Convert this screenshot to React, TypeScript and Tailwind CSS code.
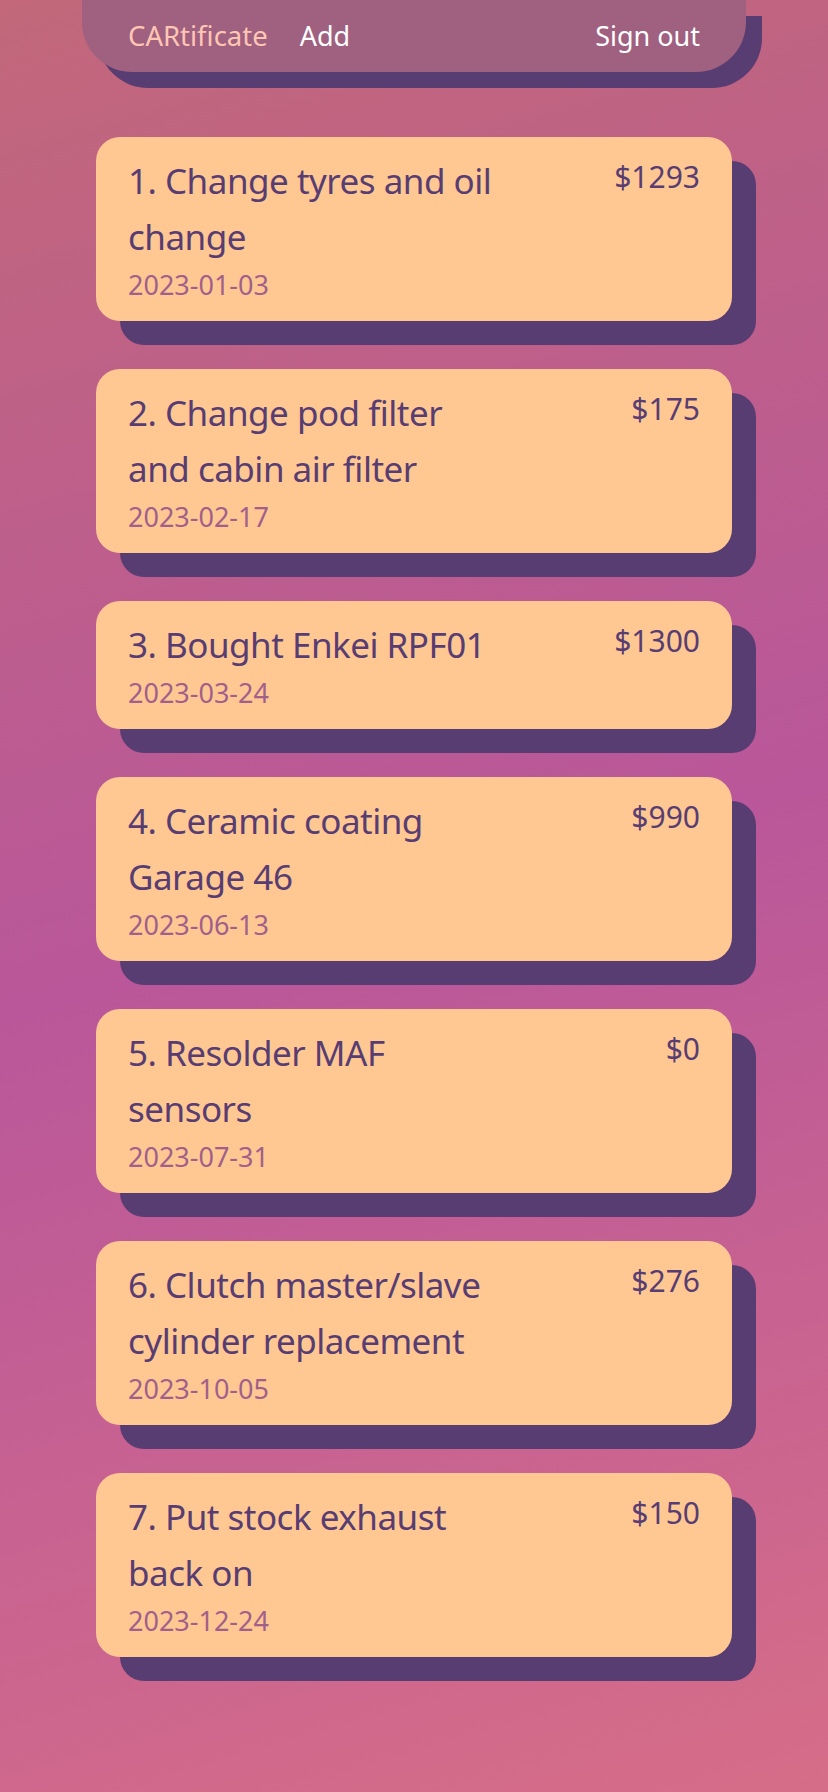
const records = [
  { title: '1. Change tyres and oil change', price: '$1293', date: '2023-01-03' },
  { title: '2. Change pod filter and cabin air filter', price: '$175', date: '2023-02-17' },
  { title: '3. Bought Enkei RPF01', price: '$1300', date: '2023-03-24' },
  { title: '4. Ceramic coating Garage 46', price: '$990', date: '2023-06-13' },
  { title: '5. Resolder MAF sensors', price: '$0', date: '2023-07-31' },
  { title: '6. Clutch master/slave cylinder replacement', price: '$276', date: '2023-10-05' },
  { title: '7. Put stock exhaust back on', price: '$150', date: '2023-12-24' },
];

function NavBar() {
  return (
    <nav className="mx-auto flex h-[72px] w-[664px] items-center rounded-b-[50px] bg-[#a0607f] px-[46px] text-[27px] leading-[40px] shadow-[16px_16px_0_#583d72]">
      <span className="text-[27.5px] text-[#ffc6b4]">CARtificate</span>
      <span className="ml-[32px] text-white">Add</span>
      <span className="ml-auto text-white">Sign out</span>
    </nav>
  );
}

function RecordCard({ title, price, date }: { title: string; price: string; date: string }) {
  return (
    <div className="mx-auto w-[636px] rounded-[24px] bg-[#ffc893] px-8 py-4 shadow-[24px_24px_0_#583d72]">
      <div className="flex items-start justify-between">
        <div className="w-[372px] text-[35px] leading-[56px] tracking-[-0.5px] text-[#583d72]">{title}</div>
        <div className="text-[30px] leading-[48px] text-[#583d72]">{price}</div>
      </div>
      <div className="text-[27px] leading-[40px] text-[#a0608a]">{date}</div>
    </div>
  );
}

export default function App() {
  return (
    <div
      className="min-h-screen bg-[linear-gradient(164deg,#c2687a_0%,#b9579a_50%,#d66d88_100%)] pb-[113px]"
      style={{ fontFamily: '"Noto Sans", "Open Sans", sans-serif' }}
    >
      <NavBar />
      <div className="mt-[65px] flex flex-col gap-[48px]">
        {records.map(r => (
          <RecordCard key={r.title} {...r} />
        ))}
      </div>
    </div>
  );
}
